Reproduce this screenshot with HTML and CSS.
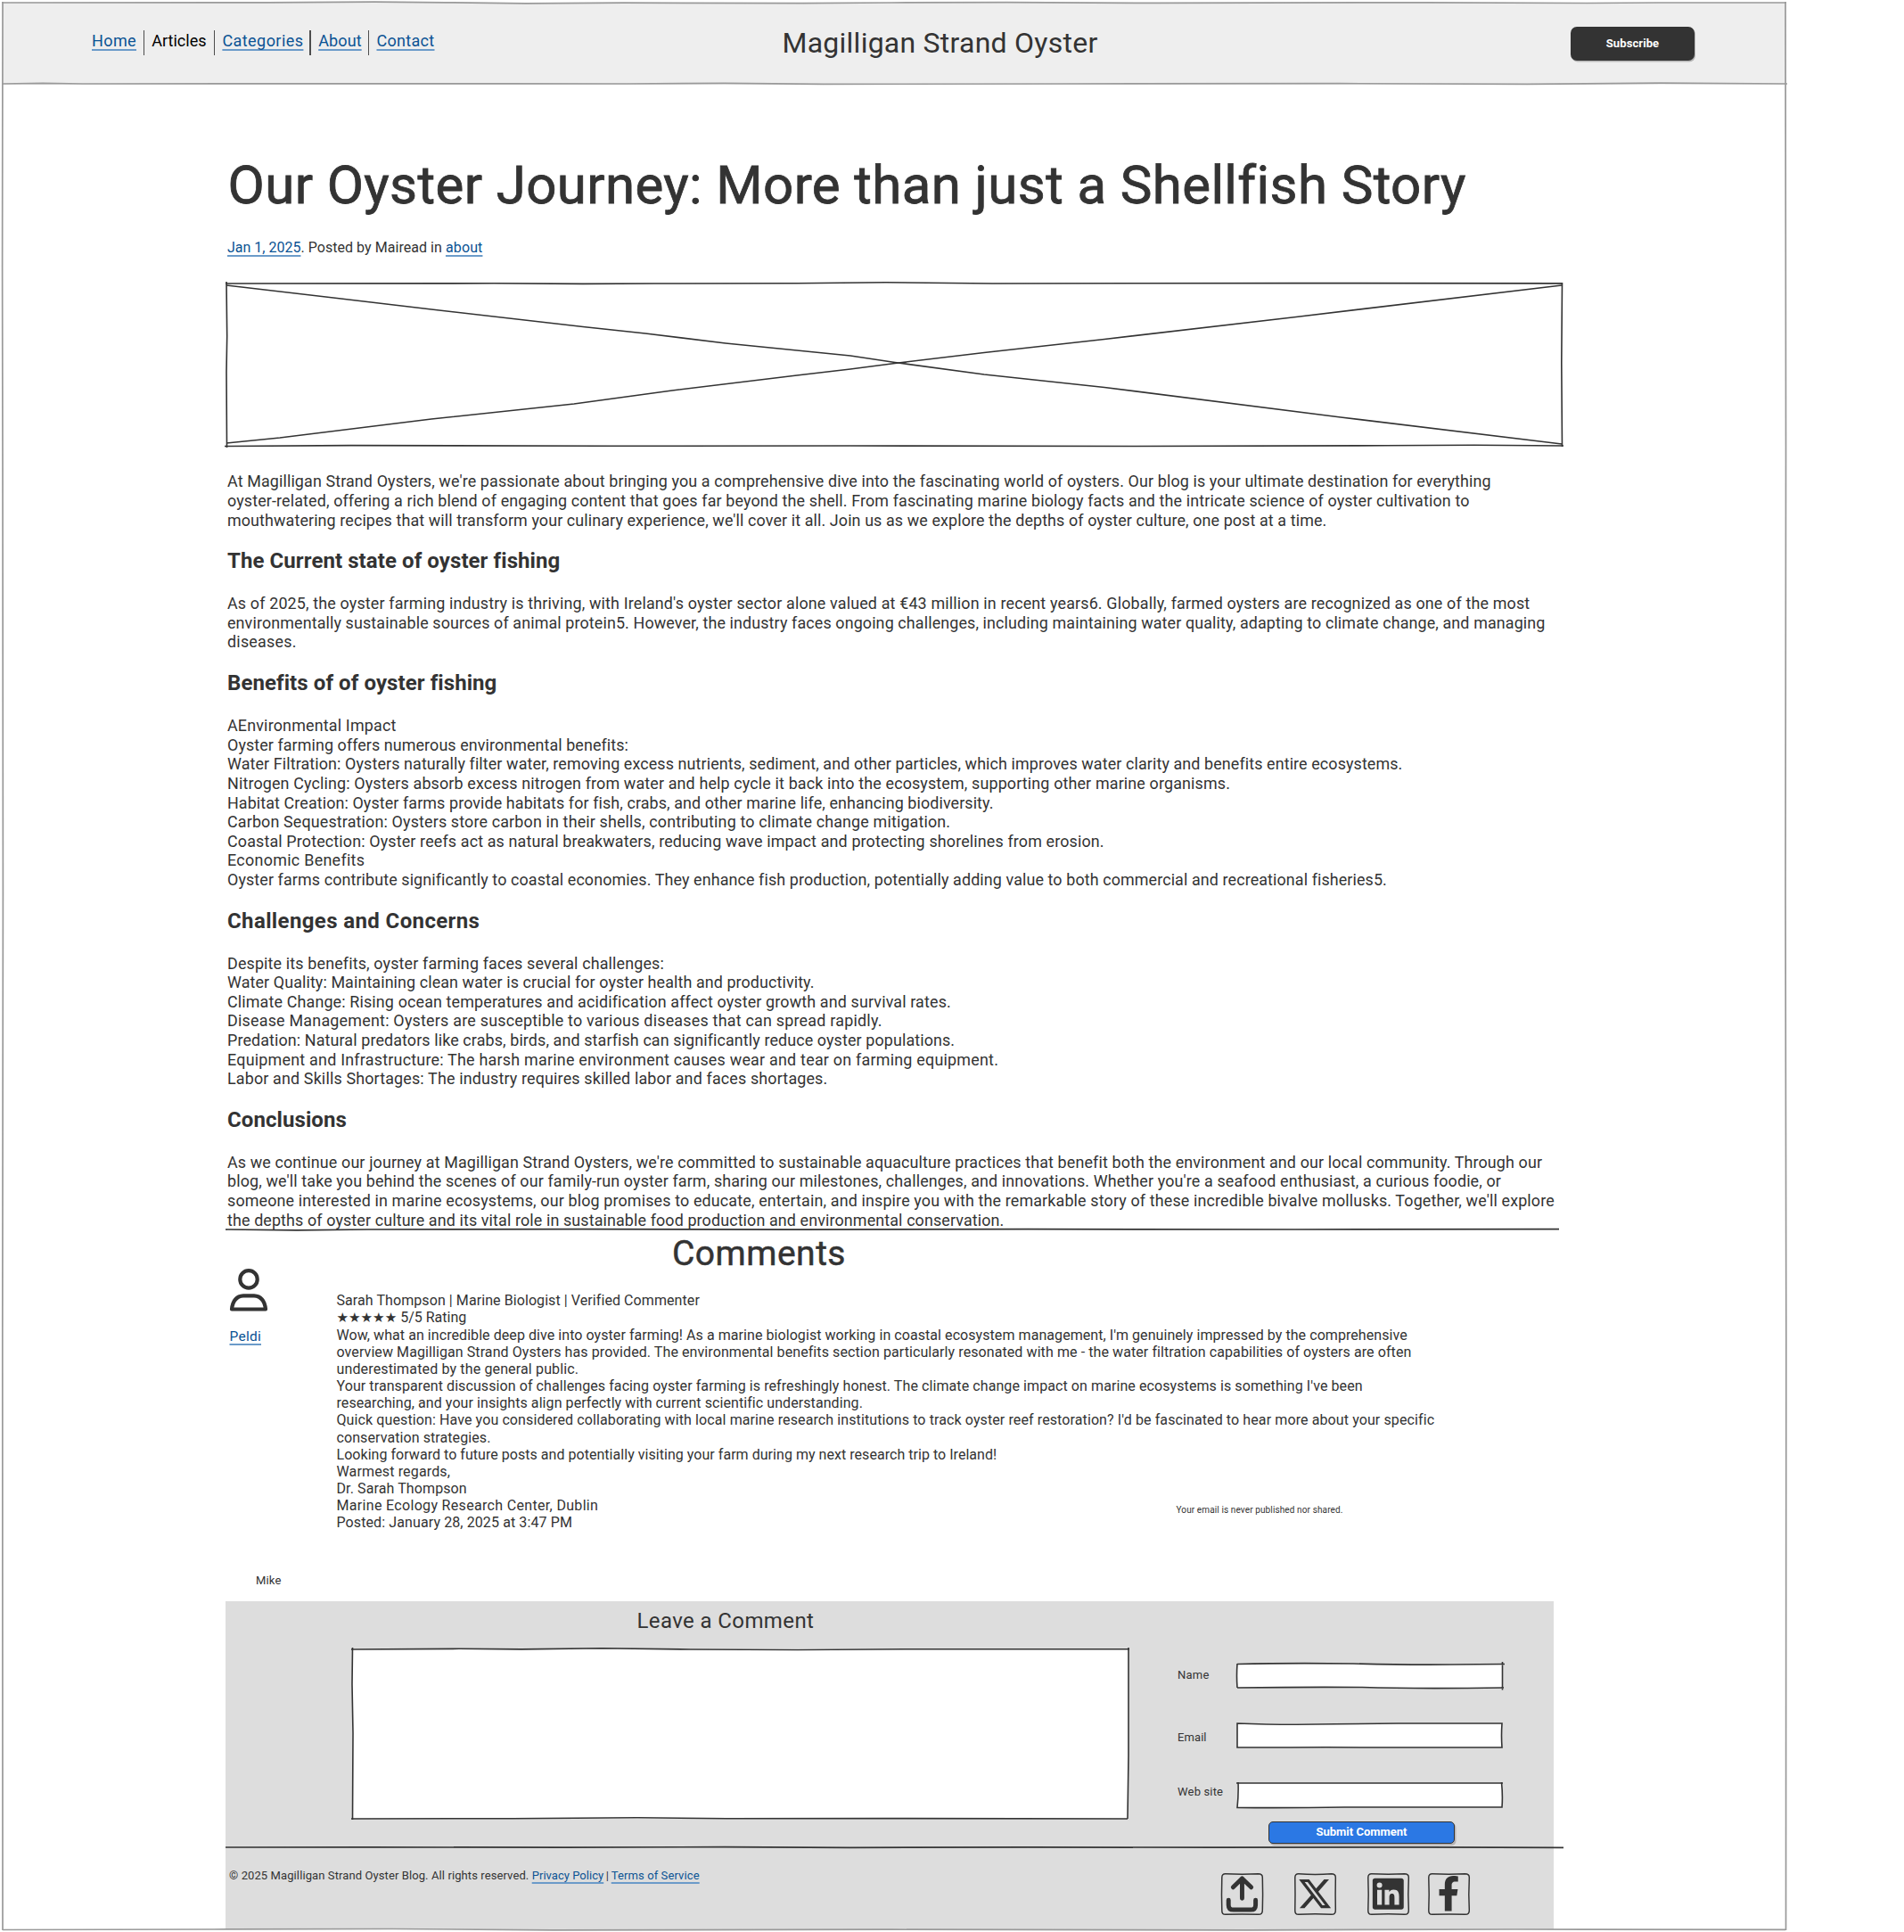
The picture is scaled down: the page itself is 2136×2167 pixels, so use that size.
FILE: index.html
```html
<!DOCTYPE html>
<html lang="en">
<head>
<meta charset="utf-8">
<title>Magilligan Strand Oyster</title>
<link rel="stylesheet" href="styles.css">
</head>
<body>
<div class="page">
  <svg class="frame" viewBox="0 0 2010 2167" fill="none">
    <path d="M2 3L300 2.900L420 2.200L500 2.800L590 3.800L700 3.200L900 3.600L1000 3L1130 2.700L1300 3.400L1600 2.800L1780 3.500L1860 3L2004 3"/>
    <path d="M3 2L2.600 300L3 520L3.400 1000L2.800 1500L3 2165"/>
    <path d="M2003 2L2003.500 500L2003 1000L2003.800 1500L2003.500 2165"/>
    <path d="M3 2164.500L240 2164L440 2163.500L620 2164.800L1000 2164.200L1400 2164.800L1700 2164L2003 2164.300"/>
  </svg>

  <header class="top">
    <nav class="nav">
      <a class="n1" href="#">Home</a><i></i><b class="n2">Articles</b><i></i><a class="n3" href="#">Categories</a><i></i><a class="n4" href="#">About</a><i></i><a class="n5" href="#">Contact</a>
    </nav>
    <div class="brand">Magilligan Strand Oyster</div>
    <button class="subscribe">Subscribe</button>
    <svg class="edge" viewBox="0 0 2000 4" fill="none"><path d="M0 2L45 1.300L90 2L560 1.800L700 2L810 1.300L920 2.400L1190 2L1500 1.700L1710 2.300L1860 1.200L2002 2"/></svg>
  </header>

  <main class="main">
    <h1>Our Oyster Journey: More than just a Shellfish Story</h1>
    <div class="meta"><a class="m1" href="#">Jan 1, 2025</a><span class="m2">. Posted by Mairead in </span><a class="m3" href="#">about</a></div>
    <svg class="picture" viewBox="0 0 1500 184" fill="none">
      <path d="M-1 1L300 .800L400 1.400L480 1L640 .700L740 -.300L860 1L1200 .600L1499 .900"/>
      <path d="M0 -1L.700 60L0 100L.500 185M1498.500 0L1497.800 90L1498.500 184"/>
      <path d="M-2 183.500L140 182.600L430 183.300L700 183L1020 183.500L1300 182.800L1400 182.200L1500 183"/>
      <path d="M0 3L120 17L230 30L400 49.500L470 57L560 68L620 74L700 82L750 89.500L850 103L985 117.500L1250 151L1498 181"/>
      <path d="M0 180L60 174L230 153L390 136L500 121L640 104L700 97L750 90.500L850 78.500L985 63.500L1200 38.500L1498 3"/>
    </svg>

    <div class="text first">
      <p class="t124">At Magilligan Strand Oysters, we're passionate about bringing you a comprehensive dive into the fascinating world of oysters. Our blog is your ultimate destination for everything</p>
      <p class="t136">oyster-related, offering a rich blend of engaging content that goes far beyond the shell. From fascinating marine biology facts and the intricate science of oyster cultivation to</p>
      <p class="t111">mouthwatering recipes that will transform your culinary experience, we'll cover it all. Join us as we explore the depths of oyster culture, one post at a time.</p>
    </div>
    <h2>The Current state of oyster fishing</h2>
    <div class="text">
      <p class="t160">As of 2025, the oyster farming industry is thriving, with Ireland's oyster sector alone valued at €43 million in recent years6. Globally, farmed oysters are recognized as one of the most</p>
      <p class="t126">environmentally sustainable sources of animal protein5. However, the industry faces ongoing challenges, including maintaining water quality, adapting to climate change, and managing</p>
      <p class="t224">diseases.</p>
    </div>
    <h2>Benefits of of oyster fishing</h2>
    <div class="text">
      <p class="t182">AEnvironmental Impact</p>
      <p class="t088">Oyster farming offers numerous environmental benefits:</p>
      <p class="t111">Water Filtration: Oysters naturally filter water, removing excess nutrients, sediment, and other particles, which improves water clarity and benefits entire ecosystems.</p>
      <p class="t146">Nitrogen Cycling: Oysters absorb excess nitrogen from water and help cycle it back into the ecosystem, supporting other marine organisms.</p>
      <p class="t103">Habitat Creation: Oyster farms provide habitats for fish, crabs, and other marine life, enhancing biodiversity.</p>
      <p class="t152">Carbon Sequestration: Oysters store carbon in their shells, contributing to climate change mitigation.</p>
      <p class="t146">Coastal Protection: Oyster reefs act as natural breakwaters, reducing wave impact and protecting shorelines from erosion.</p>
      <p class="t299">Economic Benefits</p>
      <p class="t111">Oyster farms contribute significantly to coastal economies. They enhance fish production, potentially adding value to both commercial and recreational fisheries5.</p>
    </div>
    <h2 class="wide">Challenges and Concerns</h2>
    <div class="text">
      <p class="t152">Despite its benefits, oyster farming faces several challenges:</p>
      <p class="t103">Water Quality: Maintaining clean water is crucial for oyster health and productivity.</p>
      <p class="t146">Climate Change: Rising ocean temperatures and acidification affect oyster growth and survival rates.</p>
      <p class="t224">Disease Management: Oysters are susceptible to various diseases that can spread rapidly.</p>
      <p class="t117">Predation: Natural predators like crabs, birds, and starfish can significantly reduce oyster populations.</p>
      <p class="t230">Equipment and Infrastructure: The harsh marine environment causes wear and tear on farming equipment.</p>
      <p class="t160">Labor and Skills Shortages: The industry requires skilled labor and faces shortages.</p>
    </div>
    <h2>Conclusions</h2>
    <div class="text">
      <p class="t134">As we continue our journey at Magilligan Strand Oysters, we're committed to sustainable aquaculture practices that benefit both the environment and our local community. Through our</p>
      <p class="t134">blog, we'll take you behind the scenes of our family-run oyster farm, sharing our milestones, challenges, and innovations. Whether you're a seafood enthusiast, a curious foodie, or</p>
      <p class="t149">someone interested in marine ecosystems, our blog promises to educate, entertain, and inspire you with the remarkable story of these incredible bivalve mollusks. Together, we'll explore</p>
      <p class="t124">the depths of oyster culture and its vital role in sustainable food production and environmental conservation.</p>
    </div>
  </main>

  <svg class="rule rule-comments" viewBox="0 0 1496 4" fill="none"><path d="M0 2L80 2.800L160 2L400 1.700L640 2.200L900 1.700L1200 2L1496 1.700"/></svg>

  <section class="comments">
    <h3>Comments</h3>
    <div class="thread">
      <div class="author">
        <svg width="42" height="48" viewBox="0 0 42 48" fill="none" stroke="#333" stroke-width="4.200">
          <circle cx="21" cy="11.900" r="9.700"/>
          <path d="M15 30.300H27Q38.500 31 40 45.500H2Q3.500 31 15 30.300Z" stroke-linejoin="round"/>
        </svg>
        <a href="#">Peldi</a>
      </div>
      <div class="comment">
        <p class="c078">Sarah Thompson | Marine Biologist | Verified Commenter</p>
        <p class="c000"><span class="stars">★★★★★</span> 5/5 Rating</p>
        <p class="c066">Wow, what an incredible deep dive into oyster farming! As a marine biologist working in coastal ecosystem management, I'm genuinely impressed by the comprehensive</p>
        <p class="c086">overview Magilligan Strand Oysters has provided. The environmental benefits section particularly resonated with me - the water filtration capabilities of oysters are often</p>
        <p class="c145">underestimated by the general public.</p>
        <p class="c086">Your transparent discussion of challenges facing oyster farming is refreshingly honest. The climate change impact on marine ecosystems is something I've been</p>
        <p class="c078">researching, and your insights align perfectly with current scientific understanding.</p>
        <p class="c106">Quick question: Have you considered collaborating with local marine research institutions to track oyster reef restoration? I'd be fascinated to hear more about your specific</p>
        <p class="c086">conservation strategies.</p>
        <p class="c039">Looking forward to future posts and potentially visiting your farm during my next research trip to Ireland!</p>
        <p class="c145">Warmest regards,</p>
        <p class="c106">Dr. Sarah Thompson</p>
        <p class="c324">Marine Ecology Research Center, Dublin</p>
        <p class="c106">Posted: January 28, 2025 at 3:47 PM</p>
      </div>
      <small class="privacy-note">Your email is never published nor shared.</small>
    </div>
    <div class="mike">Mike</div>
  </section>

  <section class="panel">
    <h4>Leave a Comment</h4>
    <form class="form">
      <div class="box area"><svg viewBox="0 0 871 191"><path d="M-1 1L120 .300L190 .900L280 -.200L380 1L500 1.500L620 .800L872 .700"/><path d="M.500 -1L0 40L1 95L.500 192M871 -1L871 120L870 191M-1 191L180 190.700L320 189.800L420 190.700L600 190.600L870 191"/></svg></div>
      <div class="fields">
        <label class="l1">Name</label>
        <div class="box"><svg viewBox="0 0 297 27"><path d="M0 .500Q60 -1 130 0Q190 1.500 240 1L300 .500M0 27Q80 26 140 26.500Q200 28.500 299 27M0 0Q-1 14 0 27M297.500 -2V29.500"/></svg></div>
        <label class="l2">Email</label>
        <div class="box"><svg viewBox="0 0 297 27"><path d="M0 0Q50 2 110 .800L180 0H297Q296 14 297 27H140Q100 26.500 60 27H0Z"/></svg></div>
        <label class="l3">Web site</label>
        <div class="box"><svg viewBox="0 0 297 27"><path d="M-1 0H298M1 -1Q1.500 14 0 27.500Q60 28 120 27H297Q298 14 296.500 -1"/></svg></div>
        <button class="submit" type="button">Submit Comment</button>
      </div>
    </form>
    <svg class="rule rule-footer" viewBox="0 0 1501 4" fill="none"><path d="M0 2L160 1.800L380 2.200L560 1.600L700 2.300L900 1.800L1110 2.200L1350 1.800L1501 2.300"/></svg>
    <footer class="footer">
      <div class="legal"><span class="f1">© 2025 Magilligan Strand Oyster Blog. All rights reserved. </span><a class="f2" href="#">Privacy Policy</a><span class="bar">|</span><a class="f3" href="#">Terms of Service</a></div>
      <div class="social">
        <svg viewBox="0 0 48 48"><path class="tile" d="M5 .800Q24 1.500 42 .800Q47 .800 46.800 5Q47.400 24 46.800 42Q47 47 42 46.800Q24 46.200 5 46.800Q.500 47 .800 42Q.200 24 .800 5Q.800 .600 5 .800Z"/><path d="M23.700 6V28.500M13.500 16L23.700 6L34 16M8.300 30.500V36Q8.300 41.500 14 41.500H33.500Q39 41.500 39 36V30.500" fill="none" stroke="#333" stroke-width="5" stroke-linecap="round" stroke-linejoin="round"/></svg>
        <svg viewBox="0 0 48 48"><path class="tile" d="M5 .800Q24 2 42 .800Q47 .800 46.800 5Q46.400 24 46.800 42Q47 47 42 46.800Q24 45.800 5 46.800Q.500 47 .800 42Q1.200 24 .800 5Q.800 .600 5 .800Z"/><path transform="translate(3.200 3.200) scale(1.680)" fill="#333" d="M18.244 2.250h3.308l-7.227 8.260 8.502 11.240H16.170l-5.214-6.817L4.990 21.750H1.680l7.730-8.835L1.254 2.250H8.080l4.713 6.231zm-1.161 17.520h1.833L7.084 4.126H5.117z"/></svg>
        <svg viewBox="0 0 48 48"><path class="tile" d="M5 .800Q24 1.800 42 .800Q47 .800 46.800 5Q45.800 24 46.800 42Q47 47 42 46.800Q24 45.800 5 46.800Q.500 47 .800 42Q1.600 24 .800 5Q.800 .600 5 .800Z"/><path transform="translate(5.900 5.800) scale(1.470)" fill="#333" d="M20.447 20.452h-3.554v-5.569c0-1.328-.027-3.037-1.852-3.037-1.853 0-2.136 1.445-2.136 2.939v5.667H9.351V9h3.414v1.561h.046c.477-.900 1.637-1.850 3.370-1.850 3.601 0 4.267 2.370 4.267 5.455v6.286zM5.337 7.433a2.062 2.062 0 0 1-2.063-2.065 2.064 2.064 0 1 1 2.063 2.065zm1.782 13.019H3.555V9h3.564v11.452zM22.225 0H1.771C.792 0 0 .774 0 1.729v20.542C0 23.227.792 24 1.771 24h20.451C23.200 24 24 23.227 24 22.271V1.729C24 .774 23.200 0 22.222 0h.003z"/></svg>
        <svg viewBox="0 0 48 48"><path class="tile" d="M5 .800Q24 1.500 42 .800Q47 .800 46.800 5Q45.800 24 46.800 42Q47 47 42 46.800Q24 46.200 5 46.800Q.500 47 .800 42Q1.600 24 .800 5Q.800 .600 5 .800Z"/><path transform="translate(10.900 3) scale(.078)" fill="#333" d="M279.140 288l14.220-92.660h-88.910v-60.130c0-25.350 12.420-50.060 52.240-50.060h40.420V6.260S260.430 0 225.360 0c-73.220 0-121.080 44.380-121.080 124.720v70.620H22.890V288h81.390v224h100.170V288z"/></svg>
      </div>
    </footer>
  </section>
</div>
</body>
</html>
```
FILE: styles.css
```css
* { box-sizing: border-box; }
body { margin: 0; background: #fff; color: #333; font-family: Roboto, "DejaVu Sans", sans-serif; }
h1, h2, h3, h4, p { margin: 0; white-space: nowrap; }
a { color: #0b5394; text-decoration: underline; text-decoration-color: #6b9bc9; text-decoration-thickness: 1.5px; text-underline-offset: 2.5px; text-decoration-skip-ink: none; }
svg { display: block; overflow: visible; }
button { font-family: inherit; padding: 0; border: 0; color: #fff; }

.page { position: relative; width: 2010px; height: 2167px; overflow: hidden; }
.frame { position: absolute; inset: 0; width: 2010px; height: 2167px; stroke: #999; stroke-width: 1.7; z-index: 1; pointer-events: none; }

.top { position: relative; display: grid; grid-template-columns: 874.5px 882px 1fr; margin-left: 3px; width: 2000px; height: 95px; padding-top: 3px; background: #eee; background-clip: content-box; }
.edge { position: absolute; left: 0; bottom: -1px; width: 2000px; height: 4px; stroke: #999; stroke-width: 1.7; }
.nav { display: flex; align-items: flex-start; padding: 30.5px 0 0 100px; font-size: 18px; line-height: 26px; white-space: nowrap; }
.nav a, .nav b { display: block; margin-top: -.5px; }
.nav b { color: #000; font-weight: 400; }
.nav i { flex: none; width: 1.8px; height: 28px; background: #4d4d4d; margin: 0 8px 0 7px; }
.n1 { width: 50.5px; letter-spacing: .39px; }
.n2 { width: 62.3px; letter-spacing: 0; }
.n3 { width: 91px; letter-spacing: .44px; }
.n4 { width: 48.5px; letter-spacing: .11px; }
.n5 { width: 65px; letter-spacing: .3px; }
.brand { padding-top: 27px; font-size: 32px; line-height: 36px; letter-spacing: .245px; white-space: nowrap; }
.subscribe { width: 139px; height: 38px; margin: 27px 0 0 2.5px; padding-bottom: 2px; border-radius: 7px; background: #333; box-shadow: 1px 1.5px 0 #b5b5b5; font-size: 13px; font-weight: 700; letter-spacing: .1px; }

.main { padding-left: 254px; }
h1 { padding: 77.2px 0 0 1.500px; font-size: 60px; font-weight: 400; line-height: 72px; letter-spacing: .39px; -webkit-text-stroke: .8px #333; }
.meta { margin-top: 24.3px; padding-left: 1px; font-size: 16px; line-height: 20px; white-space: pre; }
.m2 { letter-spacing: .047px; }
.m3 { letter-spacing: .125px; }
.picture { width: 1500px; height: 184px; margin-top: 28.5px; stroke: #333; stroke-width: 1.6; }
.text { padding-left: 1px; font-size: 17.9px; line-height: 21.6px; }
.first { margin-top: 28.4px; }
h2 { margin: 20.1px 0 22px; padding-left: 1px; font-size: 24px; line-height: 30px; font-weight: 700; letter-spacing: .08px; }
h2.wide { letter-spacing: .38px; }

/* tracking of the article lines */
.t088 { letter-spacing: .088px; }
.t103 { letter-spacing: .103px; }
.t111 { letter-spacing: .111px; }
.t117 { letter-spacing: .117px; }
.t124 { letter-spacing: .124px; }
.t126 { letter-spacing: .126px; }
.t134 { letter-spacing: .134px; }
.t136 { letter-spacing: .136px; }
.t146 { letter-spacing: .146px; }
.t149 { letter-spacing: .149px; }
.t152 { letter-spacing: .152px; }
.t160 { letter-spacing: .16px; }
.t182 { letter-spacing: .182px; }
.t224 { letter-spacing: .224px; }
.t230 { letter-spacing: .23px; }
.t299 { letter-spacing: .299px; }

.rule { height: 4px; margin-left: 253px; stroke: #333; stroke-width: 1.7; }
.rule-comments { width: 1496px; margin-top: -1.8px; }

.comments { padding-left: 257.5px; margin-top: 2px; }
h3 { padding-left: 496.5px; font-size: 39px; line-height: 46px; font-weight: 400; letter-spacing: .48px; -webkit-text-stroke: .5px #333; }
.thread { display: grid; grid-template-columns: 120px 942px 1fr; margin-top: -6px; }
.author a { display: block; margin-top: 17.7px; font-size: 15.5px; line-height: 20px; letter-spacing: .26px; }
.comment { padding-top: 25.9px; font-size: 16px; line-height: 19.17px; }
.comment p { height: 19.17px; }
.stars { font-family: "DejaVu Sans", sans-serif; font-size: 15.1px; line-height: 1; }
.c000 { letter-spacing: 0; }
.c039 { letter-spacing: .039px; }
.c066 { letter-spacing: .066px; }
.c078 { letter-spacing: .078px; }
.c086 { letter-spacing: .086px; }
.c106 { letter-spacing: .106px; }
.c145 { letter-spacing: .145px; }
.c324 { letter-spacing: .324px; }
.privacy-note { align-self: end; margin-bottom: 17.8px; font-size: 10px; line-height: 12px; letter-spacing: .117px; white-space: nowrap; }
.mike { margin: 47.2px 0 0 29.5px; font-size: 13px; line-height: 16px; letter-spacing: .15px; }

.panel { width: 1490px; height: 368px; margin: 15.5px 0 0 252.5px; padding-top: 6.8px; background: #ddd; }
h4 { padding-left: 462px; font-size: 24px; line-height: 30px; font-weight: 400; letter-spacing: .39px; }
.form { display: flex; gap: 54.5px; margin: 16.2px 0 0 142.5px; }
.box { background: #fff; }
.box svg { width: 100%; height: 100%; fill: none; stroke: #333; stroke-width: 1.6; }
.area { width: 871px; height: 191px; }
.fields { display: grid; grid-template-columns: 67px 297px; grid-template-rows: repeat(3, 27px) 25px; row-gap: 40px; height: 218.5px; padding-top: 16.5px; font-size: 13px; line-height: 16px; white-space: nowrap; }
.fields label { padding-left: .6px; }
.l1 { padding-top: 5.3px; letter-spacing: .215px; }
.l2 { padding-top: 8.2px; letter-spacing: .063px; }
.l3 { padding-top: 2.1px; letter-spacing: .152px; }
.submit { grid-column: 1 / 3; width: 209px; height: 25px; margin: -24px 0 0 102.5px; border: 1.6px solid #333; border-radius: 5px; background: #2b78e4; box-shadow: 1.5px 2px 0 #b8b4b4; font-size: 13px; font-weight: 700; line-height: 20px; }
.rule-footer { width: 1501px; margin: 2.3px 0 0 .5px; }
.footer { display: flex; justify-content: space-between; padding: 21.2px 0 0 4.5px; }
.legal { padding-top: .8px; font-size: 13px; line-height: 16px; white-space: pre; }
.f1 { letter-spacing: .1px; }
.f2 { letter-spacing: .033px; }
.f3 { letter-spacing: .111px; }
.bar { display: inline-block; width: 8.5px; text-align: center; }
.social { display: flex; gap: 34.5px; margin: 6px 93.5px 0 0; }
.social svg { width: 47.5px; height: 47.5px; }
.social svg:last-child { margin-left: -14px; }
.tile { fill: none; stroke: #333; stroke-width: 1.5; }
```
